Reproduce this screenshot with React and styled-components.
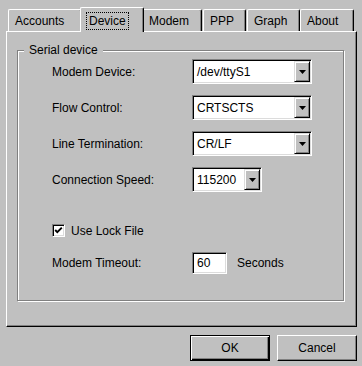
import styled, { createGlobalStyle } from "styled-components";

const GlobalStyle = createGlobalStyle`
  html, body {
    margin: 0;
    padding: 0;
    background: #c0c0c0;
  }
  body {
    font-family: "Liberation Sans", Arial, sans-serif;
    font-size: 12px;
    color: #000;
  }
`;

const tabs = [
  { label: "Accounts", w: 74, ml: 0 },
  { label: "Device", w: 64, ml: 0, active: true },
  { label: "Modem", w: 60, ml: 0 },
  { label: "PPP", w: 43, ml: 1 },
  { label: "Graph", w: 53, ml: 1 },
  { label: "About", w: 54, ml: 0 },
];

const ArrowDown = () => (
  <svg width="7" height="4" viewBox="0 0 7 4">
    <polygon points="0,0 7,0 3.5,4" fill="#000" />
  </svg>
);

const Check = () => (
  <svg width="9" height="9" viewBox="0 0 9 9">
    <polyline
      points="1.2,4 3.3,6.2 7.8,1.6"
      fill="none"
      stroke="#000"
      strokeWidth="1.9"
    />
  </svg>
);

const Combo = ({ value, width }) => (
  <ComboBox $w={width}>
    <ComboText>{value}</ComboText>
    <ComboButton>
      <ArrowDown />
    </ComboButton>
  </ComboBox>
);

const App = () => {
  return (
    <>
      <GlobalStyle />
      <Dialog>
        <TabBar>
          {tabs.map((t) => (
            <Tab key={t.label} $w={t.w} $ml={t.ml} $active={t.active}>
              {t.active ? <Focus>{t.label}</Focus> : t.label}
            </Tab>
          ))}
        </TabBar>
        <Panel>
          <Group>
            <Legend>Serial device</Legend>
            <Rows>
              <Row $h={25} $top={1}>
                <Label>Modem Device:</Label>
                <Combo value="/dev/ttyS1" width={120} />
              </Row>
              <Row $h={25} $top={11}>
                <Label>Flow Control:</Label>
                <Combo value="CRTSCTS" width={120} />
              </Row>
              <Row $h={25} $top={11}>
                <Label>Line Termination:</Label>
                <Combo value="CR/LF" width={120} />
              </Row>
              <Row $h={25} $top={11}>
                <Label>Connection Speed:</Label>
                <Combo value="115200" width={70} />
              </Row>
              <Row $h={13} $top={32}>
                <CheckBox>
                  <Check />
                </CheckBox>
                <CheckLabel>Use Lock File</CheckLabel>
              </Row>
              <Row $h={21} $top={15}>
                <Label>Modem Timeout:</Label>
                <Input>60</Input>
                <Unit>Seconds</Unit>
              </Row>
            </Rows>
          </Group>
        </Panel>
        <Buttons>
          <Button $default>OK</Button>
          <Button>Cancel</Button>
        </Buttons>
      </Dialog>
    </>
  );
};

const Dialog = styled.div`
  display: flex;
  flex-direction: column;
  padding: 7px 5px 0 6px;
`;

const TabBar = styled.div`
  display: flex;
  align-items: flex-end;
  height: 24px;
  margin-left: 2px;
`;

const Tab = styled.div`
  position: relative;
  box-sizing: border-box;
  display: flex;
  align-items: center;
  width: ${({ $w }) => $w}px;
  height: ${({ $active }) => ($active ? 25 : 22)}px;
  margin-left: ${({ $ml, $active }) => ($active ? -2 : $ml)}px;
  margin-right: ${({ $active }) => ($active ? -2 : 0)}px;
  margin-bottom: ${({ $active }) => ($active ? -1 : 0)}px;
  padding-left: 6px;
  padding-top: ${({ $active }) => ($active ? 1 : 0)}px;
  background: #c0c0c0;
  border-top: 1px solid #fff;
  border-left: 1px solid #fff;
  border-right: 1px solid #000;
  border-radius: 2px 2px 0 0;
  box-shadow: inset -1px 0 0 #808080;
  z-index: ${({ $active }) => ($active ? 2 : 1)};
  line-height: 14px;
  white-space: nowrap;
`;

const Focus = styled.span`
  padding: 1px 2px;
  outline: 1px dotted #000;
`;

const Panel = styled.div`
  position: relative;
  display: flex;
  flex-direction: column;
  padding: 11px 12px 25px 10px;
  border-top: 1px solid #fff;
  border-left: 1px solid #fff;
  border-right: 1px solid #000;
  border-bottom: 1px solid #000;
  box-shadow: inset -1px -1px 0 #808080;
`;

const Group = styled.fieldset`
  margin: 0;
  padding: 0 0 27px 0;
  border: 1px solid #808080;
  box-shadow: 1px 1px 0 #fff, inset 1px 1px 0 #fff;
  min-width: 0;
`;

const Legend = styled.legend`
  margin-left: 6px;
  padding: 0 5px;
  line-height: 15px;
  background: #c0c0c0;
`;

const Rows = styled.div`
  display: flex;
  flex-direction: column;
  padding-left: 34px;
`;

const Row = styled.div`
  display: flex;
  align-items: center;
  height: ${({ $h }) => $h}px;
  margin-top: ${({ $top }) => $top}px;
`;

const Label = styled.span`
  width: 140px;
  flex-shrink: 0;
  line-height: 14px;
`;

const sunken = `
  box-sizing: border-box;
  border-style: solid;
  border-width: 1px;
  border-color: #808080 #fff #fff #808080;
  box-shadow: inset 1px 1px 0 #000, inset -1px -1px 0 #dcdcdc;
  background: #fff;
`;

const ComboBox = styled.div`
  ${sunken}
  display: flex;
  align-items: stretch;
  width: ${({ $w }) => $w}px;
  height: 25px;
  padding: 1px 1px 1px 1px;
`;

const ComboText = styled.span`
  flex: 1;
  display: flex;
  align-items: center;
  padding-left: 3px;
  line-height: 14px;
`;

const ComboButton = styled.div`
  box-sizing: border-box;
  display: flex;
  align-items: center;
  justify-content: center;
  width: 16px;
  background: #c0c0c0;
  border-style: solid;
  border-width: 1px;
  border-color: #dcdcdc #000 #000 #dcdcdc;
  box-shadow: inset 1px 1px 0 #fff, inset -1px -1px 0 #808080;
  svg {
    display: block;
    margin-top: 1px;
  }
`;

const CheckBox = styled.div`
  ${sunken}
  display: flex;
  align-items: center;
  justify-content: center;
  width: 13px;
  height: 13px;
  svg {
    display: block;
  }
`;

const CheckLabel = styled.span`
  margin-left: 6px;
  line-height: 14px;
`;

const Input = styled.div`
  ${sunken}
  display: flex;
  align-items: center;
  width: 35px;
  height: 22px;
  padding-left: 4px;
  line-height: 14px;
`;

const Unit = styled.span`
  margin-left: 10px;
  line-height: 14px;
`;

const Buttons = styled.div`
  display: flex;
  justify-content: flex-end;
  gap: 7px;
  margin-top: 8px;
`;

const Button = styled.button`
  box-sizing: border-box;
  width: 80px;
  height: 26px;
  padding: 0;
  font-family: "Liberation Sans", Arial, sans-serif;
  font-size: 12px;
  color: #000;
  background: #c0c0c0;
  border-style: solid;
  border-width: 1px;
  border-color: ${({ $default }) =>
    $default ? "#000" : "#fff #000 #000 #fff"};
  box-shadow: ${({ $default }) =>
    $default
      ? "inset 1px 1px 0 #fff, inset -1px -1px 0 #000, inset -2px -2px 0 #808080"
      : "inset -1px -1px 0 #808080"};
`;

export default App;
